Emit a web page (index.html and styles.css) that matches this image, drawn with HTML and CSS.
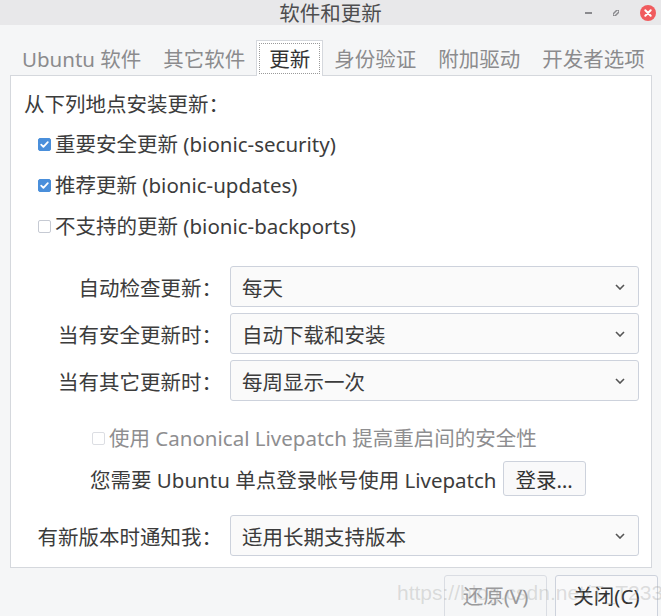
FILE: index.html
```html
<!DOCTYPE html>
<html lang="zh-CN">
<head>
<meta charset="utf-8">
<title>软件和更新</title>
<link rel="stylesheet" href="styles.css">
</head>
<body>
<div class="window">
  <header class="titlebar">
    <span class="title">软件和更新</span>
    <div class="controls">
      <span class="ctl-min"></span>
      <svg class="ctl-max" width="8" height="8" viewBox="0 0 8 8"><path d="M1 4 L4 1 L7 1 L7 4 L4 7 L1 7 Z" fill="#8a8a8e"/><path d="M2 6 L6 2" stroke="#e8e8ea" stroke-width="1.3"/></svg>
      <span class="ctl-close"><svg width="16" height="16" viewBox="0 0 16 16"><path d="M5.3 5.3 L10.7 10.7 M10.7 5.3 L5.3 10.7" stroke="#fff" stroke-width="2" stroke-linecap="round"/></svg></span>
    </div>
  </header>

  <nav class="tabs">
    <span class="tab">Ubuntu 软件</span>
    <span class="tab">其它软件</span>
    <span class="tab active"><span class="focus">更新</span></span>
    <span class="tab">身份验证</span>
    <span class="tab">附加驱动</span>
    <span class="tab">开发者选项</span>
  </nav>

  <section class="panel">
    <div class="heading">从下列地点安装更新：</div>
    <div class="checks">
      <label class="check"><span class="box on"><svg width="13" height="13" viewBox="0 0 13 13"><path d="M3.2 6.6 L5.4 8.8 L9.8 4.2" fill="none" stroke="#fff" stroke-width="1.8" stroke-linecap="round" stroke-linejoin="round"/></svg></span>重要安全更新 (bionic-security)</label>
      <label class="check"><span class="box on"><svg width="13" height="13" viewBox="0 0 13 13"><path d="M3.2 6.6 L5.4 8.8 L9.8 4.2" fill="none" stroke="#fff" stroke-width="1.8" stroke-linecap="round" stroke-linejoin="round"/></svg></span>推荐更新 (bionic-updates)</label>
      <label class="check"><span class="box"></span>不支持的更新 (bionic-backports)</label>
    </div>

    <div class="form">
      <div class="row">
        <span class="label">自动检查更新：</span>
        <div class="select"><span>每天</span><svg class="chev" width="10" height="6" viewBox="0 0 10 6"><path d="M1 1 L5 5 L9 1" fill="none" stroke="#555" stroke-width="1.6"/></svg></div>
      </div>
      <div class="row">
        <span class="label">当有安全更新时：</span>
        <div class="select"><span>自动下载和安装</span><svg class="chev" width="10" height="6" viewBox="0 0 10 6"><path d="M1 1 L5 5 L9 1" fill="none" stroke="#555" stroke-width="1.6"/></svg></div>
      </div>
      <div class="row">
        <span class="label">当有其它更新时：</span>
        <div class="select"><span>每周显示一次</span><svg class="chev" width="10" height="6" viewBox="0 0 10 6"><path d="M1 1 L5 5 L9 1" fill="none" stroke="#555" stroke-width="1.6"/></svg></div>
      </div>
    </div>

    <label class="livepatch"><span class="box disabled"></span>使用 Canonical Livepatch 提高重启间的安全性</label>
    <div class="login-row">
      <span>您需要 Ubuntu 单点登录帐号使用 Livepatch</span>
      <button class="btn login">登录…</button>
    </div>

    <div class="row notify">
      <span class="label">有新版本时通知我：</span>
      <div class="select"><span>适用长期支持版本</span><svg class="chev" width="10" height="6" viewBox="0 0 10 6"><path d="M1 1 L5 5 L9 1" fill="none" stroke="#555" stroke-width="1.6"/></svg></div>
    </div>
  </section>

  <footer class="actions">
    <button class="btn action disabled">还原(V)</button>
    <button class="btn action">关闭(C)</button>
    <span class="watermark">https://blog.csdn.net/T_T2333</span>
  </footer>
</div>
</body>
</html>
```

FILE: styles.css
```css
* { box-sizing: border-box; }
html, body { margin: 0; padding: 0; }
body {
  width: 661px;
  height: 616px;
  overflow: hidden;
  background: #f5f6f7;
  font-family: "Noto Sans", "Noto Sans CJK SC", sans-serif;
  font-size: 20.5px;
  color: #3c3c3c;
}
.window { position: relative; width: 661px; height: 616px; overflow: hidden; }

.titlebar {
  position: relative;
  height: 25px;
  background: #e8e8ea;
  display: flex;
  align-items: center;
  justify-content: center;
}
.title { font-size: 20.5px; color: #4d4d4f; line-height: 26px; }
.controls {
  position: absolute;
  right: 5px;
  top: 0;
  height: 25px;
  display: flex;
  align-items: center;
  gap: 20px;
}
.ctl-min { width: 7px; height: 2px; background: #8a8a8e; }
.ctl-close {
  width: 16px; height: 16px; border-radius: 50%;
  background: #f05b5e;
  display: flex;
}

.tabs {
  display: flex;
  padding: 15px 0 0 11px;
  height: 50px;
  align-items: flex-end;
}
.tab {
  height: 35px;
  padding: 4px 11px 0;
  line-height: 31px;
  color: #8b8b8d;
  white-space: nowrap;
}
.tab.active {
  position: relative;
  z-index: 1;
  background: #fff;
  border: 1px solid #d5d8dd;
  border-bottom: none;
  height: 36px;
  margin-bottom: -1px;
  padding: 2px 2px 0;
  color: #333;
}
.focus {
  display: block;
  border: 1px dotted #9a9a9a;
  padding: 2px 9px 0;
  line-height: 27px;
  height: 31px;
}

.panel {
  margin: 0 9px 0 10px;
  height: 493px;
  background: #fff;
  border: 1px solid #d5d8dd;
  padding: 14px 0 0 0;
  display: flex;
  flex-direction: column;
}
.heading { line-height: 28px; padding-left: 13px; }
.checks {
  display: flex;
  flex-direction: column;
  gap: 13px;
  margin-top: 12px;
  padding-left: 27px;
}
.check, .livepatch {
  display: flex;
  align-items: center;
  line-height: 28px;
  white-space: nowrap;
}
.box {
  width: 13px; height: 13px;
  border-radius: 2px;
  border: 1px solid #c6cad3;
  background: #fff;
  margin-right: 4px;
  display: flex;
  flex: none;
}
.box.on { background: #4a8fdb; border-color: #4a8fdb; }
.box.on svg { margin: -1px; }
.box.disabled { border-color: #dcdee3; margin-right: 4px; }

.form {
  display: flex;
  flex-direction: column;
  gap: 6px;
  margin-top: 26px;
}
.row { display: flex; align-items: center; }
.label {
  width: 211px;
  text-align: right;
  flex: none;
  margin-right: 8px;
  white-space: nowrap;
}
.select {
  width: 409px;
  height: 41px;
  border: 1px solid #cdd2dc;
  border-radius: 3px;
  background: #fafafa;
  display: flex;
  align-items: center;
  justify-content: space-between;
  padding: 0 13px 0 11px;
}
.chev { flex: none; }

.livepatch {
  margin-top: 23px;
  padding-left: 81px;
  color: #8e8e90;
}
.login-row {
  display: flex;
  align-items: center;
  margin-top: 9px;
  padding-left: 79px;
  white-space: nowrap;
}
.btn {
  font: inherit;
  color: #333;
  background: #f9f9fa;
  border: 1px solid #cdd2dc;
  border-radius: 3px;
  cursor: default;
}
.login {
  height: 35px;
  width: 83px;
  margin-left: 6px;
  padding: 0;
}
.notify { margin-top: 19px; }

.actions {
  position: relative;
  display: flex;
  justify-content: flex-end;
  gap: 8px;
  padding: 7px 3px 0 0;
}
.action {
  width: 103px;
  height: 46px;
  padding: 0 0 6px;
}
.action.disabled { color: #9a9a9c; background: #f5f6f7; border-color: #dadde3; }
.watermark {
  position: absolute;
  left: 397px;
  top: 13px;
  font-family: "Liberation Sans", sans-serif;
  font-size: 21px;
  color: rgba(150, 150, 150, 0.3);
  white-space: nowrap;
  pointer-events: none;
}
```
